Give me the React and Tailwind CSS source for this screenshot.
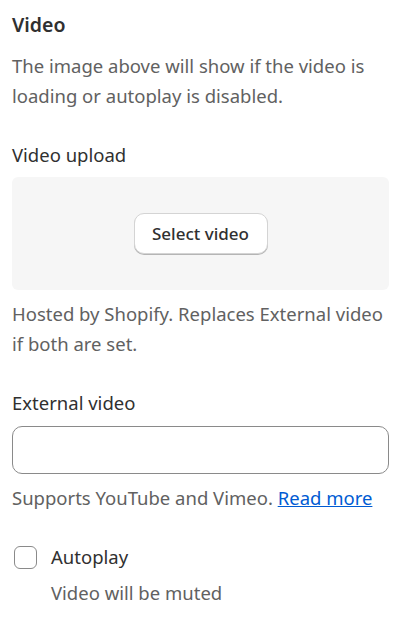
export default function App() {
  return (
    <div className="w-[398px] min-h-[620px] bg-white pl-3 pr-[9px] pt-[10px] text-[18.5px] leading-[30px] text-[#303030]" style={{ fontFamily: '"Noto Sans", "Open Sans", sans-serif' }}>
      <h2 className="text-[19.5px] font-semibold text-[#303030]">Video</h2>
      <p className="mt-[11px] text-[#616161]">The image above will show if the video is loading or autoplay is disabled.</p>

      <div className="mt-[29px]">Video upload</div>
      <div className="mt-[7px] flex h-[113px] items-center justify-center rounded-md bg-[#f6f6f6]">
        <button className="h-[41px] w-[134px] rounded-[10px] border border-[#d4d4d4] bg-white text-[17px] font-medium text-[#303030] shadow-[0_1px_0_#b5b5b5]">
          Select video
        </button>
      </div>
      <p className="mt-[9px] text-[#616161]">Hosted by Shopify. Replaces External video if both are set.</p>

      <div className="mt-[29px]">External video</div>
      <input className="mt-[8px] block h-[48px] w-full rounded-[10px] border border-[#8a8a8a] bg-white px-3 outline-none" />
      <p className="mt-[9px] text-[#616161]">
        Supports YouTube and Vimeo.{' '}
        <a href="#" className="text-[#005bd3] underline">Read more</a>
      </p>

      <div className="mt-[29px] flex items-center gap-[14px] pl-[2px]">
        <span className="h-[23px] w-[23px] rounded-[6px] border border-[#8a8a8a] bg-white" />
        <span>Autoplay</span>
      </div>
      <p className="mt-[6px] pl-[39px] text-[#616161]">Video will be muted</p>
    </div>
  );
}
